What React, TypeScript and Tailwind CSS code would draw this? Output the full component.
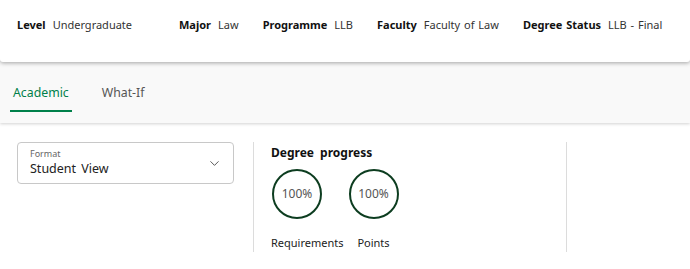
import { ChevronDown } from 'lucide-react';

const details: Array<{ label: string; value: string; width?: string }> = [
  { label: 'Level', value: 'Undergraduate', width: 'w-[138px]' },
  { label: 'Major', value: 'Law' },
  { label: 'Programme', value: 'LLB' },
  { label: 'Faculty', value: 'Faculty of Law' },
  { label: 'Degree Status', value: 'LLB - Final' },
];

function ProgressRing({ percent }: { percent: number }) {
  return (
    <div className="flex h-[50px] w-[50px] items-center justify-center rounded-full border-2 border-[#0d3d20] text-[12px] text-[#555]">
      {percent}%
    </div>
  );
}

export default function App() {
  return (
    <div className="h-[269px] w-[690px] overflow-hidden bg-white font-['Noto_Sans',sans-serif] text-[#222]">
      <header className="relative z-20 flex h-[62px] items-start gap-6 whitespace-nowrap rounded-b-[3px] bg-white px-[17px] pt-[17px] shadow-[0_1px_4px_rgba(0,0,0,0.35)]">
        {details.map(({ label, value, width }) => (
          <div key={label} className={`flex items-baseline gap-[7px] text-[11px] leading-[16px] [word-spacing:1px] ${width ?? ''}`}>
            <span className="font-bold text-[#111]">{label}</span>
            <span className="text-[#333]">{value}</span>
          </div>
        ))}
      </header>

      <nav className="relative z-10 flex h-[61px] items-start gap-[30px] bg-[#f9f9f9] px-[10px] pt-[23px] shadow-[0_1px_3px_rgba(0,0,0,0.18)]">
        <button type="button" className="border-b-2 border-[#00804a] px-[3px] pb-[9px] text-[12.3px] leading-[16px] text-[#00804a]">
          Academic
        </button>
        <button type="button" className="text-[12.3px] leading-[16px] text-[#555]">
          What-If
        </button>
      </nav>

      <main className="flex pt-[19px]">
        <div className="pl-[17px] pr-[19px]">
          <div className="flex h-[42px] w-[217px] items-center justify-between rounded-[4px] border border-[#c8c8c8] pl-[12px] pr-[11px]">
            <div className="flex flex-col">
              <span className="text-[9px] leading-[12px] text-[#666]">Format</span>
              <span className="text-[12.5px] leading-[18px] text-[#222] [word-spacing:2px]">Student View</span>
            </div>
            <ChevronDown size={15} strokeWidth={1.3} className="text-[#333]" />
          </div>
        </div>

        <section className="h-[110px] w-[314px] border-x border-[#dcdcdc] pl-[17px]">
          <h2 className="mt-[2px] text-[12px] font-bold leading-[18px] text-[#111] [word-spacing:3px]">Degree progress</h2>
          <div className="mt-[7px] flex gap-[5px]">
            <div className="flex flex-col items-start">
              <div className="pl-px">
                <ProgressRing percent={100} />
              </div>
              <span className="mt-[16px] text-[11px] leading-[16px] text-[#222]">Requirements</span>
            </div>
            <div className="flex flex-col items-center">
              <ProgressRing percent={100} />
              <span className="mt-[16px] text-[11px] leading-[16px] text-[#222]">Points</span>
            </div>
          </div>
        </section>
      </main>
    </div>
  );
}
